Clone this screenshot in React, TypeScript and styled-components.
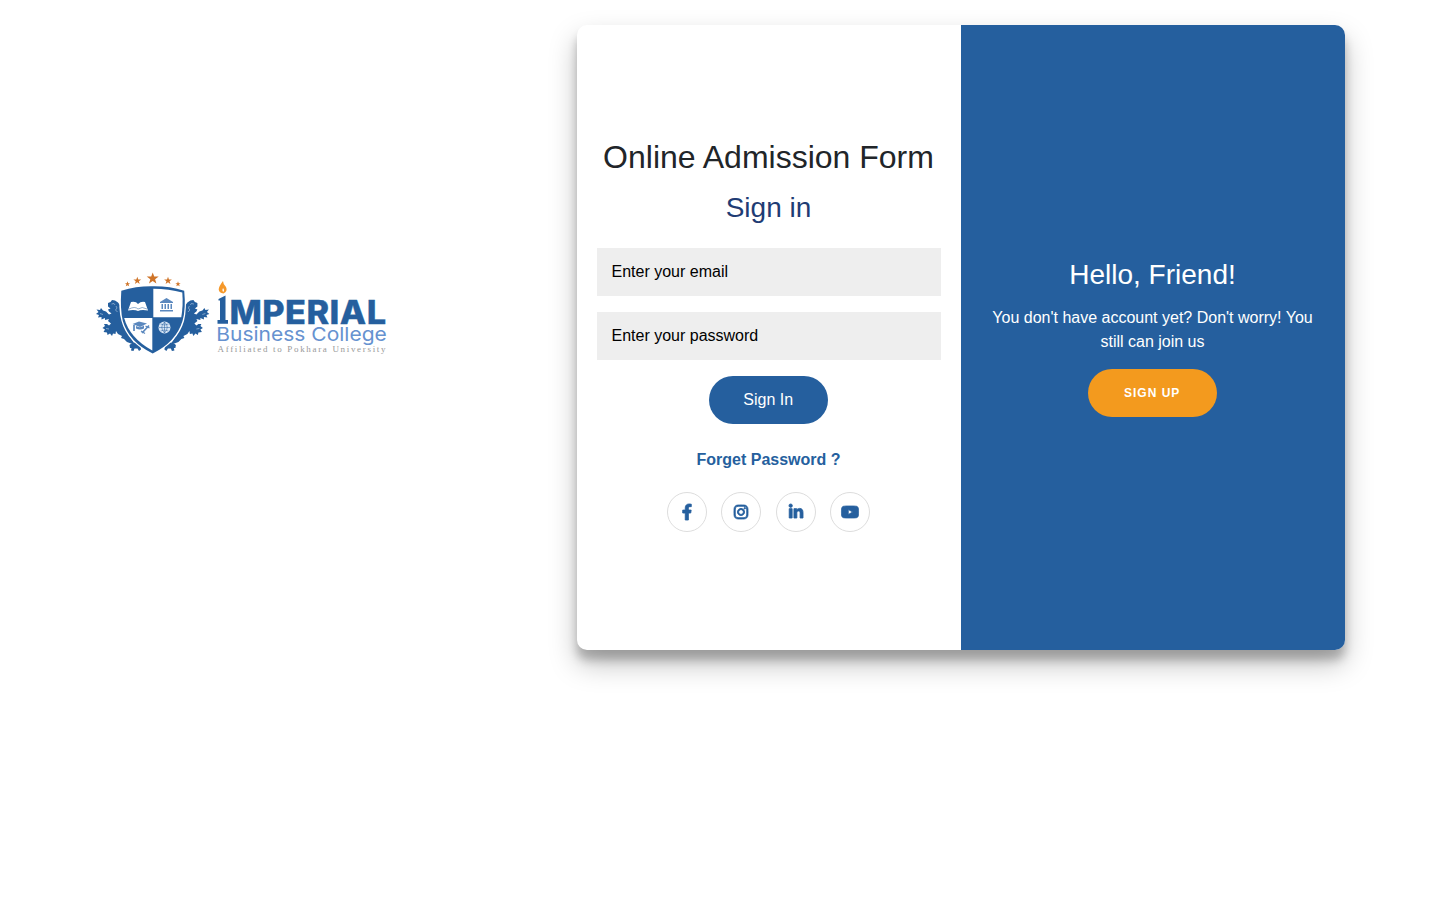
import React from "react";
import styled, { createGlobalStyle } from "styled-components";
import { FaFacebookF, FaInstagram, FaLinkedinIn, FaYoutube } from "react-icons/fa";

const blue = "#255f9e";

const Global = createGlobalStyle`
  *, *::before, *::after { box-sizing: border-box; }
  body { margin: 0; background: #fff; color: #212529; font: 16px/1.5 "Liberation Sans", Arial, sans-serif; }
`;

const Page = styled.main`
  display: flex;
  align-items: flex-start;
  min-height: 100vh;
  padding: 25px 0 0 96px;
`;

const Brand = styled.div`
  flex: none;
  width: 480.5px;
  padding-top: 245px;
  svg { display: block; }
`;

const Card = styled.section`
  display: grid;
  flex: none;
  grid-template-columns: 1fr 1fr;
  width: 768px;
  height: 625px;
  border-radius: 10px;
  overflow: hidden;
  background: #fff;
  box-shadow: 0 14px 28px rgba(0, 0, 0, 0.25), 0 10px 10px rgba(0, 0, 0, 0.22);
`;

const FormPanel = styled.form`
  display: flex;
  flex-direction: column;
  align-items: center;
  padding: 113px 20px 0;
`;

const WelcomePanel = styled.div`
  display: flex;
  flex-direction: column;
  align-items: center;
  padding: 233px 20px 0;
  background: ${blue};
  color: #fff;
  text-align: center;
`;

const Title = styled.h2`
  margin: 0 0 15px;
  font-size: 32px;
  font-weight: 400;
  line-height: 38px;
  white-space: nowrap;
`;

const Heading = styled.h3<{ $color?: string }>`
  margin: 0;
  font-size: 28px;
  font-weight: 400;
  line-height: 34px;
  color: ${(p) => p.$color ?? "inherit"};
`;

const Fields = styled.div`
  display: flex;
  flex-direction: column;
  gap: 16px;
  width: 100%;
  margin: 23px 0 16px;
`;

const Field = styled.input`
  width: 100%;
  height: 48px;
  padding: 12px 15px;
  border: 0;
  border-radius: 0;
  background: #eee;
  font: inherit;
  &::placeholder { color: #000; opacity: 1; }
`;

const Button = styled.button<{ $accent?: boolean }>`
  width: ${(p) => (p.$accent ? "129px" : "119px")};
  height: 48px;
  border: 0;
  border-radius: 24px;
  padding: 0 0.6px 0 0;
  background: ${(p) => (p.$accent ? "#f39a1e" : blue)};
  color: #fff;
  font: ${(p) => (p.$accent ? "bold 12px" : "16px")} "Liberation Sans", Arial, sans-serif;
  letter-spacing: ${(p) => (p.$accent ? "1px" : "normal")};
`;

const Forgot = styled.a`
  margin-top: 24px;
  color: ${blue};
  font-weight: 700;
`;

const Message = styled.p`
  margin: 14px 0 15px;
`;

const Socials = styled.div`
  display: flex;
  gap: 14.45px;
  margin-top: 20px;
`;

const Social = styled.a<{ $glyph: number }>`
  display: flex;
  align-items: center;
  justify-content: center;
  width: 40px;
  height: 40px;
  border: 1px solid #ddd;
  border-radius: 50%;
  color: ${blue};
  svg {
    flex: none;
    width: ${(p) => p.$glyph}px;
    height: 16px;
    overflow: visible;
    stroke: currentColor;
    stroke-width: 27px;
  }
`;

const star = "M0-6 1.5-1.9 6-1.9 2.4.8 3.7 5 0 2.5-3.7 5-2.4.8-6-1.9-1.5-1.9Z";

function Lion() {
  return (
    <g fill={blue}>
      <path d="M108 303 110.500 302 112 300 115 300.500 118 302.500 120.500 306 121 314 123 323 127 332 132 340 134 343 131 343.500 127 342 124 339 121 338 122 336 118 334 116 331 115.500 334 113 333.500 112 336 110 333.500 107.500 335 107 332.500 103.500 332 105 329.500 102.500 328 105 326 104 324 107 324 109 325.500 111 323.500 108 321 109 319 105 320 105 318 101.500 319.500 101.500 317 98 317.500 99 315 96 314 98.500 312 96.500 309.500 100 310 101 308 103 310.500 106 311.500 109 314.500 111.500 313.500 109 311.500 108 309.500 110.500 308.500 108 306.500Z" />
      <path d="M130 348 129.500 345 132 343 135 342.500 138.500 343.500 140.500 346 141 349.500 139 351 137.500 348.500 134.500 348.500 133.500 351 131 350.500 131.500 348Z" />
      <path d="M111.500 304 114 303.500 115 305M116 306 117 308 115.500 310 117.500 312M100 313.500 103 314.500M106 328.500 109 329" fill="none" stroke="#b9cde3" strokeWidth=".6" />
    </g>
  );
}

function Logo() {
  return (
    <svg width="292" height="88" viewBox="96 270 292 88" role="img" aria-label="Imperial Business College">
      <Lion />
      <g transform="translate(305.4 0) scale(-1 1)"><Lion /></g>
      <path d="M120 290Q137 285 152.700 285.500 169 285 185.500 290 187 309 184 321 178 342 152.700 355 127 342 121.500 321 118 309 120 290Z" fill="#fff" />
      <path d="M121.300 290.700Q137 286 152.700 286.300 169 286 184.200 290.700 186 309 182.500 321 176 342 152.700 353.500 129 342 122.800 321 120 309 121.300 290.700Z" fill={blue} />
      <path d="M153.300 288.700Q169 288.700 182.300 292.500 183.300 306 181.300 317.200H153.300Z" fill="#fff" />
      <path d="M124.200 318H152.300V350.500Q129.500 338 124.200 318Z" fill="#fff" />
      <path d="M128 310.500 131 302Q136 301 138 304 141 301 145 302L148 310.500Q141 309.500 138 311 135 309.500 128 310.500Z" fill="#fff" />
      <path d="M129 309Q135 306 138 309 142 306 147 309" fill="none" stroke={blue} strokeWidth=".5" />
      <g fill="#5b88be">
        <path d="M160 302 166.500 298 173 302V303H160ZM161.500 304h1.500v5h-1.500zm3 0h1.500v5h-1.500zm3 0h1.500v5h-1.500zm3 0h1.500v5h-1.500zM160 310h13v1.500h-13z" />
        <path d="M132.500 324 139 321.500 147 323.500 140 327ZM136 326Q140 328.500 144 325.500V328.500Q140 330.500 136 328.500Z" />
        <path d="M134 325V331M142 333 149 325.500" fill="none" stroke="#5b88be" strokeWidth="1.700" />
        <path d="M141 331 145 333.500M145.500 326 149.500 328" fill="none" stroke="#5b88be" strokeWidth="1.200" />
      </g>
      <circle cx="164.500" cy="327.500" r="6" fill="#d7e5f5" />
      <path d="M159 327.500H170M164.500 322V333M160.500 324Q164.500 326 168.500 324M160.500 331Q164.500 329 168.500 331M164.500 322Q159 327 164.500 333M164.500 322Q170 327 164.500 333" fill="none" stroke={blue} strokeWidth=".5" />
      <g fill="#cf7428">
        <path d={star} transform="translate(152.700 278.500)" />
        <path d={star} transform="translate(137.300 280.700) scale(.65)" />
        <path d={star} transform="translate(168 280.700) scale(.65)" />
        <path d={star} transform="translate(127.500 284) scale(.45)" />
        <path d={star} transform="translate(178 284) scale(.45)" />
      </g>
      <path d="M223 281Q223 284 226 287 228 291 223.500 293.500 219 293 218.700 289.500 219 286 223 281Z" fill="#f5982a" />
      <path d="M223 288Q225 290.500 223 292 221.500 290.500 223 288Z" fill="#fff" />
      <path d="M218.500 299 225.500 295.500V320H228V323.700H217.500V320H220V300.500H218.500Z" fill={blue} />
      <text x="229.500" y="323.700" fill={blue} stroke={blue} strokeWidth=".3" fontFamily="Inter, sans-serif" fontWeight="800" fontSize="32.500" letterSpacing=".4" textLength="157" lengthAdjust="spacingAndGlyphs">MPERIAL</text>
      <text x="216.300" y="340.500" fill="#6692d0" fontFamily="Inter, sans-serif" fontSize="19" textLength="170.500" lengthAdjust="spacingAndGlyphs">Business College</text>
      <text x="217.500" y="352.300" fill="#999" fontFamily="Liberation Serif, serif" fontSize="9" textLength="168" lengthAdjust="spacing">Affiliated to Pokhara University</text>
    </svg>
  );
}

export default function App() {
  return (
    <>
      <Global />
      <Page>
        <Brand><Logo /></Brand>
        <Card>
          <FormPanel>
            <Title>Online Admission Form</Title>
            <Heading $color="#1f3c74">Sign in</Heading>
            <Fields>
              <Field type="email" placeholder="Enter your email" />
              <Field type="password" placeholder="Enter your password" />
            </Fields>
            <Button type="button">Sign In</Button>
            <Forgot>Forget Password ?</Forgot>
            <Socials>
              <Social $glyph={10} aria-label="Facebook"><FaFacebookF /></Social>
              <Social $glyph={14} aria-label="Instagram"><FaInstagram /></Social>
              <Social $glyph={14} aria-label="LinkedIn"><FaLinkedinIn /></Social>
              <Social $glyph={18} aria-label="YouTube"><FaYoutube /></Social>
            </Socials>
          </FormPanel>
          <WelcomePanel>
            <Heading>Hello, Friend!</Heading>
            <Message>You don't have account yet? Don't worry! You still can join us</Message>
            <Button type="button" $accent>SIGN UP</Button>
          </WelcomePanel>
        </Card>
      </Page>
    </>
  );
}
